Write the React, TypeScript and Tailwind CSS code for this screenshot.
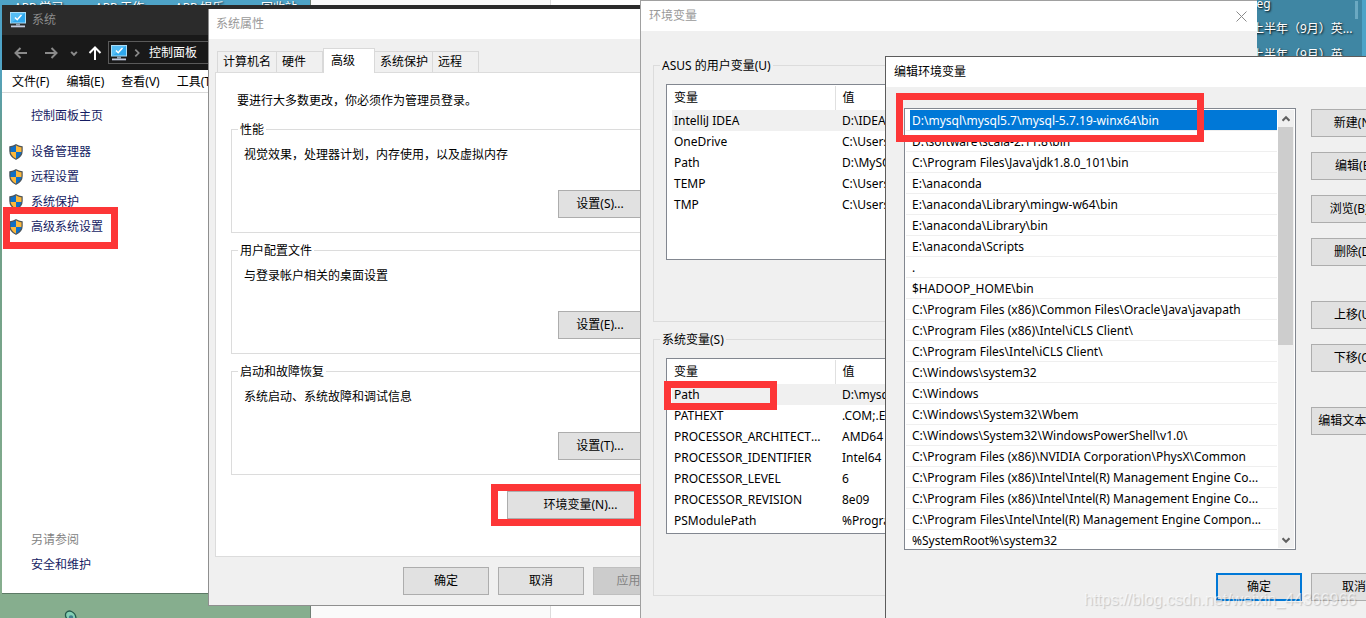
import React from "react";
import clsx from "clsx";

const buttonBase = "h-7 shrink-0 border text-center whitespace-nowrap";
const buttonNormal = "border-[#adadad] bg-[#e1e1e1] text-black";

function PushButton({ children, className, variant = "normal" }: { children: React.ReactNode; className?: string; variant?: "normal" | "primary" | "disabled" }) {
  return (
    <button
      type="button"
      disabled={variant === "disabled"}
      className={clsx(
        buttonBase,
        variant === "normal" && buttonNormal,
        variant === "primary" && "border-2 border-[#0078d7] bg-[#e1e1e1] text-black",
        variant === "disabled" && "border-[#bfbfbf] bg-[#cccccc] text-[#838383]",
        className ?? "w-[86px]",
      )}
    >
      {children}
    </button>
  );
}

function Monitor({ className }: { className?: string }) {
  return (
    <svg viewBox="0 0 16 16" className={className} aria-hidden="true">
      <rect x="0.5" y="0.5" width="15" height="10.5" fill="#2fa8ee" stroke="#a9dcf7" />
      <path d="M1 11V1h14z" fill="#55bdf5" />
      <path d="M5 5.5l2.2 2.2L11.5 3" fill="none" stroke="#fff" strokeWidth="1.5" />
      <rect x="6" y="11.5" width="4" height="2" fill="#8fa3b5" />
      <rect x="1" y="13.5" width="14" height="1.8" fill="#c3cbe0" />
    </svg>
  );
}

const shieldPath = "M7 0.8C5 2.2 3 2.7 0.9 2.8V7c0 4 2.6 6.6 6.1 8.2C10.5 13.6 13.1 11 13.1 7V2.8C11 2.7 9 2.2 7 0.8Z";

function Shield() {
  return (
    <svg viewBox="0 0 14 16" className="h-4 w-3.5 shrink-0" aria-hidden="true">
      <clipPath id="shield-shape">
        <path d={shieldPath} />
      </clipPath>
      <g clipPath="url(#shield-shape)">
        <rect width="7" height="8" fill="#0f6fc6" />
        <rect x="7" width="7" height="8" fill="#fdb83a" />
        <rect y="8" width="7" height="8" fill="#fdb83a" />
        <rect x="7" y="8" width="7" height="8" fill="#0f6fc6" />
      </g>
      <path d={shieldPath} fill="none" stroke="#4c5358" strokeWidth="1.2" />
    </svg>
  );
}

function Arrow({ d, className, width = 1.8 }: { d: string; className: string; width?: number }) {
  return (
    <svg viewBox="0 0 14 14" className={className} fill="none" stroke="currentColor" strokeWidth={width} aria-hidden="true">
      <path d={d} />
    </svg>
  );
}

const tasks = ["设备管理器", "远程设置", "系统保护", "高级系统设置"];

function SystemWindow() {
  return (
    <section aria-label="系统" className="absolute top-[5px] left-0.5 flex h-[589px] w-[660px] flex-col border-b border-[#5d7a66] bg-white">
      <header className="flex h-[30px] shrink-0 items-center gap-1.5 bg-[#2b2b2b] pl-2 text-[#8b8b8b]">
        <Monitor className="h-4 w-4" />
        <h1>系统</h1>
      </header>
      <nav className="flex h-[35px] shrink-0 items-center bg-[#191919] text-[#8a8a8a]">
        <button type="button" aria-label="后退" className="ml-3">
          <Arrow className="h-3.5 w-3.5" width={2} d="M13 7H1.5M6.5 2L1.5 7l5 5" />
        </button>
        <button type="button" aria-label="前进" className="ml-4">
          <Arrow className="h-3.5 w-3.5" width={2} d="M1 7h11.5M7.5 2l5 5-5 5" />
        </button>
        <button type="button" aria-label="最近" className="ml-3">
          <Arrow className="h-2 w-2" width={3.5} d="M2 5l5 5 5-5" />
        </button>
        <button type="button" aria-label="向上" className="ml-2.5 text-white">
          <Arrow className="h-3.5 w-3.5" width={2} d="M7 14V1.5M1.5 7L7 1.5 12.5 7" />
        </button>
        <div className="ml-1.5 flex h-[23px] flex-1 items-center border border-[#5a5a5a] pl-0.5">
          <Monitor className="h-4 w-4" />
          <Arrow className="ml-1.5 h-2 w-2" width={3} d="M4 1l6 6-6 6" />
          <a href="#control-panel" className="ml-2 text-white">控制面板</a>
        </div>
      </nav>
      <div className="flex h-[23px] shrink-0 items-center gap-[17px] border-b border-[#d9d9d9] pt-0.5 pl-2.5 text-black">
        <button type="button">文件(F)</button>
        <button type="button">编辑(E)</button>
        <button type="button">查看(V)</button>
        <button type="button">工具(T)</button>
      </div>
      <aside className="flex w-[206px] flex-1 flex-col pt-[15px] pb-5 text-[#151c63]">
        <a href="#home" className="pl-[29px] leading-4">控制面板主页</a>
        <ul className="mt-[15px]">
          {tasks.map((t) => (
            <li key={t}>
              <a href="#task" className="flex h-[25px] items-center gap-2 pl-[7px]">
                <Shield />
                {t}
              </a>
            </li>
          ))}
        </ul>
        <p className="mt-auto pb-[9px] pl-[29px] leading-4 text-[#838383]">另请参阅</p>
        <a href="#security" className="pl-[29px] leading-4">安全和维护</a>
      </aside>
    </section>
  );
}

const tabs = [
  { label: "计算机名", width: "w-[60px]" },
  { label: "硬件", width: "w-[46px]" },
  { label: "高级", width: "w-[52px]", active: true },
  { label: "系统保护", width: "w-[58px]" },
  { label: "远程", width: "w-[46px]" },
];

const groups = [
  { legend: "性能", text: "视觉效果，处理器计划，内存使用，以及虚拟内存", button: "设置(S)..." },
  { legend: "用户配置文件", text: "与登录帐户相关的桌面设置", button: "设置(E)..." },
  { legend: "启动和故障恢复", text: "系统启动、系统故障和调试信息", button: "设置(T)..." },
];

function PropertiesWindow() {
  return (
    <section aria-label="系统属性" className="absolute top-[9px] left-[208px] w-[480px] border-b border-l border-[#8f8f8f] bg-[#f0f0f0] text-black">
      <header className="flex h-[30px] items-center bg-white pl-[7px] text-[#999999]">
        <h2>系统属性</h2>
      </header>
      <div className="px-1.5 pt-[9px] pb-2.5">
        <div role="tablist" className="flex h-[25px] items-end pl-0.5">
          {tabs.map((t) => (
            <button
              key={t.label}
              type="button"
              role="tab"
              aria-selected={!!t.active}
              className={clsx(
                "shrink-0 border-t border-r border-[#d9d9d9] pl-[5px] text-left",
                t.width,
                t.active ? "h-[25px] border-l bg-white pl-[7px]" : "mb-px h-[21px] bg-[#f0f0f0] first:border-l",
              )}
            >
              {t.label}
            </button>
          ))}
        </div>
        <div className="-mt-px border border-[#dcdcdc] bg-white pt-5 pr-3.5 pb-[37px] pl-[15px]">
          <p className="pl-1.5 leading-4">要进行大多数更改，你必须作为管理员登录。</p>
          <div className="mt-3 flex flex-col gap-[9px]">
            {groups.map((g) => (
              <fieldset key={g.legend} className="border border-[#dcdcdc] pr-6 pb-3.5 pl-3">
                <legend className="-ml-1.5 px-0.5 leading-[17px]">{g.legend}</legend>
                <p className="pt-[9px] leading-4">{g.text}</p>
                <div className="mt-[27px] flex justify-end">
                  <PushButton className="w-[84px]">{g.button}</PushButton>
                </div>
              </fieldset>
            ))}
          </div>
          <div className="mt-4 flex justify-end pr-[13px]">
            <PushButton className="w-[147px]">环境变量(N)...</PushButton>
          </div>
        </div>
        <div className="mt-2.5 flex justify-end gap-[9px] pr-[3px]">
          <PushButton>确定</PushButton>
          <PushButton>取消</PushButton>
          <PushButton variant="disabled">应用(A)</PushButton>
        </div>
      </div>
    </section>
  );
}

const userVariables = [
  ["IntelliJ IDEA", "D:\\IDEA"],
  ["OneDrive", "C:\\Users"],
  ["Path", "D:\\MySQL"],
  ["TEMP", "C:\\Users"],
  ["TMP", "C:\\Users"],
];

const systemVariables = [
  ["Path", "D:\\mysql"],
  ["PATHEXT", ".COM;.EXE"],
  ["PROCESSOR_ARCHITECTURE", "AMD64"],
  ["PROCESSOR_IDENTIFIER", "Intel64"],
  ["PROCESSOR_LEVEL", "6"],
  ["PROCESSOR_REVISION", "8e09"],
  ["PSModulePath", "%Program"],
];

function VariableGroup({ legend, rows }: { legend: string; rows: string[][] }) {
  return (
    <fieldset className="h-[265px] border border-[#dcdcdc] px-3">
      <legend className="-ml-1.5 px-0.5 leading-[17px]">{legend}</legend>
      <div className="mt-2.5 h-[176px] border border-[#828790] bg-white pt-px pl-[5px]">
        <table className="w-full table-fixed border-collapse text-left">
          <thead>
            <tr className="h-6">
              <th className="w-[163px] border-r border-[#e0e0e0] pl-0.5 font-normal">变量</th>
              <th className="pl-[7px] font-normal">值</th>
            </tr>
          </thead>
          <tbody>
            {rows.map(([name, value], i) => (
              <tr key={name} className={clsx("h-[21px]", i === 0 && "bg-[#f0f0f0]")}>
                <td className="truncate pr-2 pl-0.5 leading-[21px]">{name}</td>
                <td className="truncate pl-[7px] leading-[21px]">{value}</td>
              </tr>
            ))}
          </tbody>
        </table>
      </div>
    </fieldset>
  );
}

function EnvironmentWindow() {
  return (
    <section aria-label="环境变量" className="absolute top-0 left-[640px] h-[660px] w-[617px] border-t border-l border-[#a0a0a0] bg-[#f0f0f0] text-black">
      <header className="flex h-[30px] items-center justify-between bg-white pr-2.5 pl-2 text-[#999999]">
        <h2>环境变量</h2>
        <button type="button" aria-label="关闭">
          <svg viewBox="0 0 11 11" className="h-[11px] w-[11px]" stroke="#8a8a8a" aria-hidden="true">
            <path d="M.5.5l10 10M10.5.5l-10 10" />
          </svg>
        </button>
      </header>
      <div className="flex flex-col gap-[9px] px-3 pt-[26px]">
        <VariableGroup legend="ASUS 的用户变量(U)" rows={userVariables} />
        <VariableGroup legend="系统变量(S)" rows={systemVariables} />
      </div>
    </section>
  );
}

const paths = [
  "D:\\mysql\\mysql5.7\\mysql-5.7.19-winx64\\bin",
  "D:\\software\\scala-2.11.8\\bin",
  "C:\\Program Files\\Java\\jdk1.8.0_101\\bin",
  "E:\\anaconda",
  "E:\\anaconda\\Library\\mingw-w64\\bin",
  "E:\\anaconda\\Library\\bin",
  "E:\\anaconda\\Scripts",
  ".",
  "$HADOOP_HOME\\bin",
  "C:\\Program Files (x86)\\Common Files\\Oracle\\Java\\javapath",
  "C:\\Program Files (x86)\\Intel\\iCLS Client\\",
  "C:\\Program Files\\Intel\\iCLS Client\\",
  "C:\\Windows\\system32",
  "C:\\Windows",
  "C:\\Windows\\System32\\Wbem",
  "C:\\Windows\\System32\\WindowsPowerShell\\v1.0\\",
  "C:\\Program Files (x86)\\NVIDIA Corporation\\PhysX\\Common",
  "C:\\Program Files (x86)\\Intel\\Intel(R) Management Engine Co...",
  "C:\\Program Files (x86)\\Intel\\Intel(R) Management Engine Co...",
  "C:\\Program Files\\Intel\\Intel(R) Management Engine Compon...",
  "%SystemRoot%\\system32",
];

function EditWindow() {
  return (
    <section aria-label="编辑环境变量" className="absolute top-14 left-[885px] h-[600px] w-[530px] border-t border-l border-[#5c5c5c] bg-[#f0f0f0] text-black">
      <header className="flex h-[30px] items-center bg-white pl-2">
        <h2>编辑环境变量</h2>
      </header>
      <div className="flex flex-col px-[18px] pt-[21px]">
        <div className="flex gap-[15px]">
          <div className="flex h-[442px] w-[392px] shrink-0 border border-[#828790] bg-white p-px">
            <ul className="min-w-0 flex-1 overflow-hidden">
              {paths.map((p, i) => (
                <li key={i} className="h-[21px] border-b border-[#efefef] pl-1">
                  <button type="button" className={clsx("block h-5 w-full truncate px-0.5 text-left leading-[22px]", i === 0 && "bg-[#0078d7] text-white")}>
                    {p}
                  </button>
                </li>
              ))}
            </ul>
            <div className="ml-px flex w-4 shrink-0 flex-col bg-[#f0f0f0] text-[#606060]">
              <div className="flex h-[17px] items-center justify-center">
                <Arrow className="h-2 w-2" width={3.5} d="M1 10l6-6 6 6" />
              </div>
              <div className="h-[218px] w-[15px] bg-[#cdcdcd]" />
              <div className="mt-auto flex h-[17px] items-center justify-center">
                <Arrow className="h-2 w-2" width={3.5} d="M1 4l6 6 6-6" />
              </div>
            </div>
          </div>
          <div className="flex flex-col gap-[35px] pt-px">
            <div className="flex flex-col gap-[15px]">
              <PushButton>新建(N)</PushButton>
              <PushButton>编辑(E)</PushButton>
              <PushButton>浏览(B)...</PushButton>
              <PushButton>删除(D)</PushButton>
            </div>
            <div className="flex flex-col gap-[15px]">
              <PushButton>上移(U)</PushButton>
              <PushButton>下移(O)</PushButton>
            </div>
            <PushButton>编辑文本(T)...</PushButton>
          </div>
        </div>
        <div className="mt-[23px] flex justify-end gap-[9px]">
          <PushButton variant="primary">确定</PushButton>
          <PushButton>取消</PushButton>
        </div>
      </div>
    </section>
  );
}

const iconText = "absolute top-0 text-white leading-4 whitespace-nowrap [text-shadow:1px_1px_2px_#000]";

function Desktop() {
  return (
    <div className="absolute inset-0 bg-[linear-gradient(#4ea3c7_0px,#4ea3c7_60px,#6a9c86_140px,#86ae8e_590px)]">
      <span className={clsx(iconText, "left-3.5")}>APP 学习</span>
      <span className={clsx(iconText, "left-[95px]")}>APP 工作</span>
      <span className={clsx(iconText, "left-[175px]")}>APP 娱乐</span>
      <span className={clsx(iconText, "left-[261px]")}>回收站</span>
      <svg viewBox="0 0 14 8" className="absolute top-[610px] left-[64px] h-2 w-3.5" aria-hidden="true">
        <path d="M3 9C-1 3 4 0 7.5 1.5C11 3 12 6 12 9" fill="#83cfb4" stroke="#245a4c" strokeWidth="1.3" />
        <ellipse cx="7" cy="7" rx="2.2" ry="1.8" fill="#3f7f8c" />
      </svg>
      <div className="absolute top-0 bottom-0 left-[310px] w-[241px] border-x border-x-[#dcdcdc] border-l-[#6f7f74] bg-[#fafafa]" />
      <div className="absolute top-0 bottom-0 left-[551px] w-[100px] bg-white" />
      <div className="absolute top-0 right-0 h-20 w-[126px] bg-[#4ea3c7] pr-1 text-white [text-shadow:1px_1px_2px_#000]">
        <div className="h-full bg-[#3f86a3] pl-3">
          <p className="-ml-1.5 leading-[8px]">jpeg</p>
          <p className="pt-2 leading-[26px] whitespace-nowrap">上半年（9月）英...</p>
          <p className="leading-[26px] whitespace-nowrap">上半年（9月）英...</p>
        </div>
        <i className="absolute top-px right-2 h-[18px] w-[3px] bg-[#6ba9c2]" />
      </div>
    </div>
  );
}

const mark = "pointer-events-none absolute border-[7px] border-[#fd3637]";

export default function App() {
  return (
    <main className="relative h-screen w-full overflow-hidden bg-white text-[12px] leading-4 font-[Noto_Sans,Noto_Sans_CJK_SC,sans-serif]">
      <Desktop />
      <SystemWindow />
      <PropertiesWindow />
      <EnvironmentWindow />
      <EditWindow />
      <div className={clsx(mark, "top-[207px] left-[3px] h-[42px] w-[115px]")} />
      <div className={clsx(mark, "top-[484px] left-[491px] h-[42px] w-[150px]")} />
      <div className={clsx(mark, "top-[381px] left-[664px] h-[29px] w-[113px]")} />
      <div className={clsx(mark, "top-[93px] left-[896px] h-[49px] w-[308px]")} />
      <p className="pointer-events-none absolute top-[590px] left-[1084px] font-[Liberation_Sans,sans-serif] text-[16px] leading-5 text-white/60 [text-shadow:1px_1px_1px_rgba(0,0,0,0.18)]">
        https://blog.csdn.net/weixin_44366966
      </p>
    </main>
  );
}
